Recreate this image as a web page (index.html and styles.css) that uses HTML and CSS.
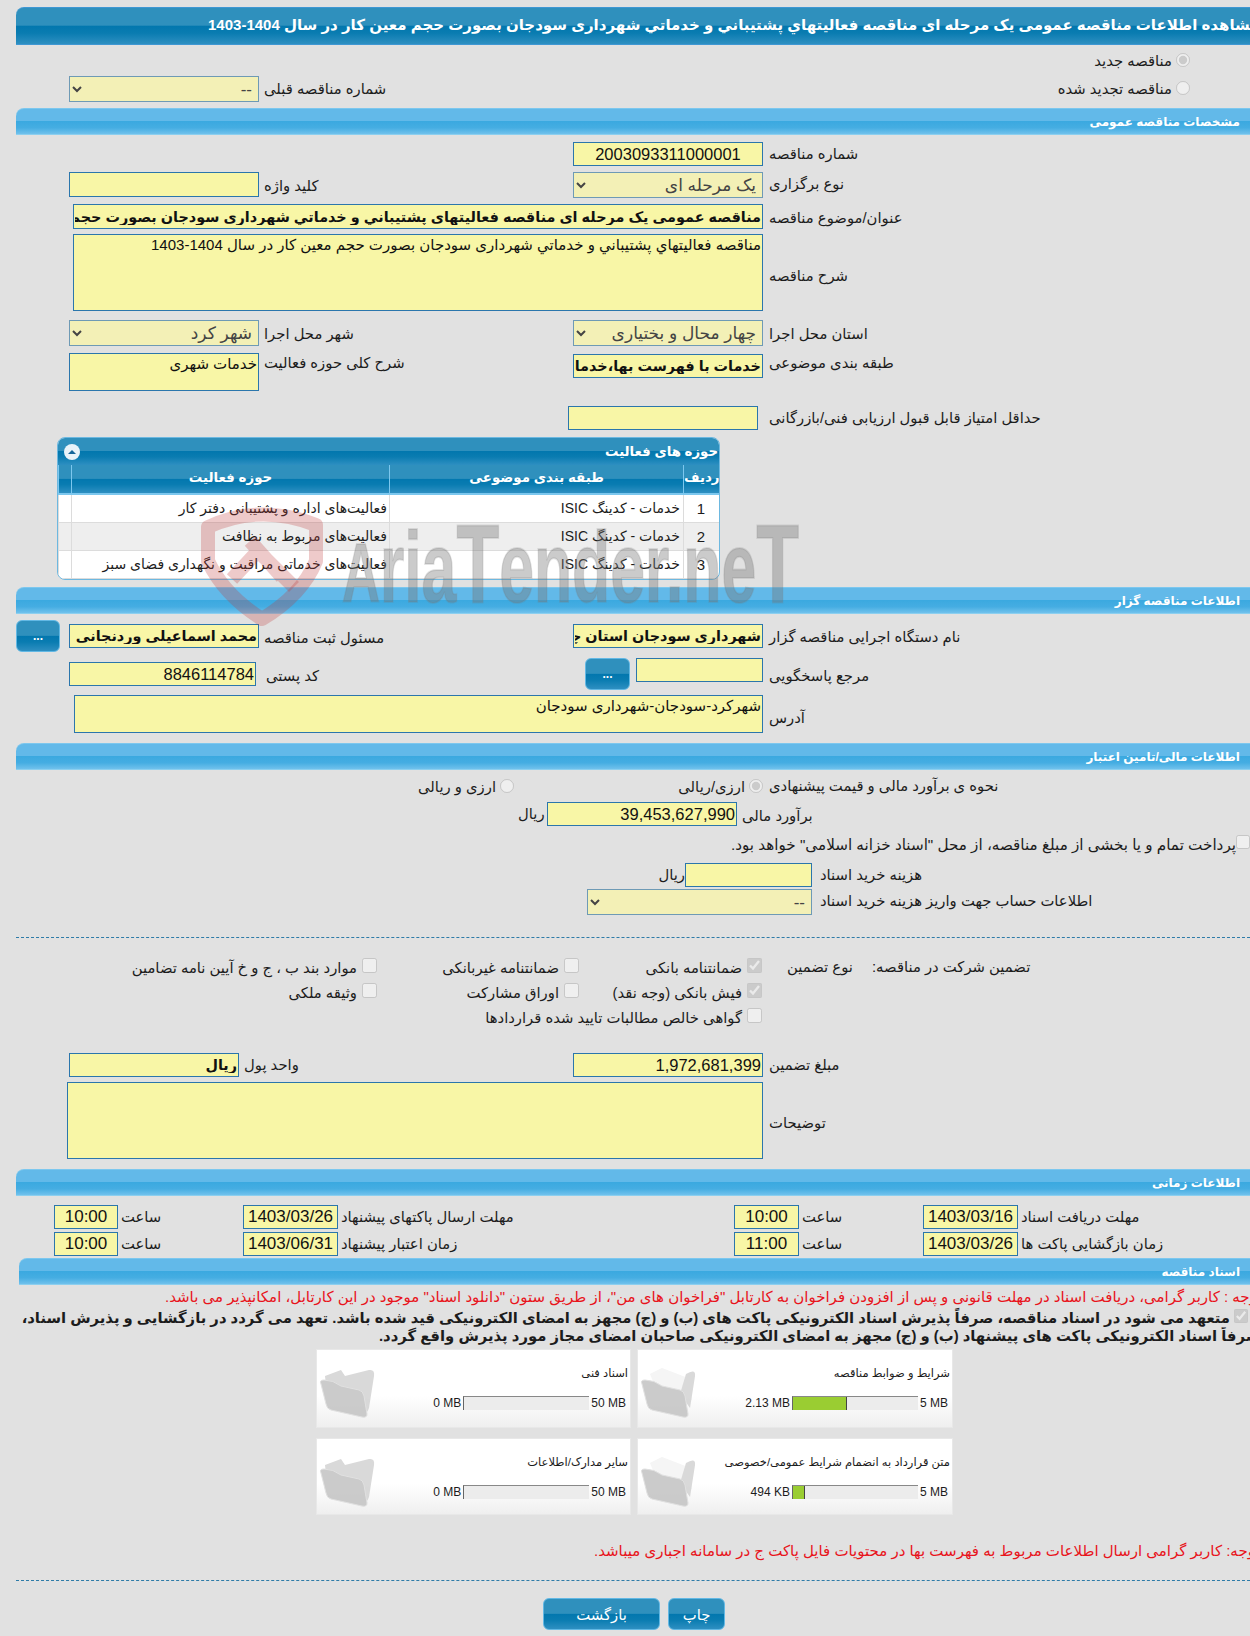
FILE: index.html
```html
<!DOCTYPE html>
<html lang="fa">
<head>
<meta charset="utf-8">
<title>مشاهده اطلاعات مناقصه</title>
<link rel="stylesheet" href="styles.css">
</head>
<body>
<div class="page">
  <h1 class="banner"><span>مشاهده اطلاعات مناقصه عمومی یک مرحله ای مناقصه فعالیتهاي پشتیباني و خدماتي شهرداری سودجان بصورت حجم معین کار در سال 1404-1403</span></h1>

  <div class="top">
    <div class="top-left">
      <select class="sel w190" disabled><option>--</option></select>
      <label class="lab lab-gap lab-t1">شماره مناقصه قبلی</label>
    </div>
    <div class="radios">
      <label class="radio-line"><input type="radio" name="kind" checked disabled><span>مناقصه جدید</span></label>
      <label class="radio-line"><input type="radio" name="kind" disabled><span>مناقصه تجدید شده</span></label>
    </div>
  </div>

  <h2 class="section"><span>مشخصات مناقصه عمومی</span></h2>
  <div class="after-section">
    <div class="row h30">
      <span></span><span></span>
      <input class="inp ctr" readonly value="2003093311000001">
      <label class="lab lab-r">شماره مناقصه</label>
    </div>
    <div class="row h32">
      <input class="inp h25" readonly>
      <label class="lab lab-l lab-s">کلید واژه</label>
      <select class="sel" disabled><option>یک مرحله ای</option></select>
      <label class="lab lab-r">نوع برگزاری</label>
    </div>
    <div class="row h30">
      <input class="inp strong wide h25" readonly value="مناقصه عمومی یک مرحله ای مناقصه فعالیتهاي پشتیباني و خدماتي شهرداری سودجان بصورت حجم معین کار در سال 1404-1403">
      <label class="lab lab-r lab-s">عنوان/موضوع مناقصه</label>
    </div>
    <div class="row h86">
      <textarea class="inp txt wide h77" readonly>مناقصه فعالیتهاي پشتیباني و خدماتي شهرداری سودجان بصورت حجم معین کار در سال 1404-1403</textarea>
      <label class="lab lab-r lab-mid">شرح مناقصه</label>
    </div>
    <div class="row h34">
      <select class="sel" disabled><option>شهر کرد</option></select>
      <label class="lab lab-l lab-s">شهر محل اجرا</label>
      <select class="sel" disabled><option>چهار محال و بختیاری</option></select>
      <label class="lab lab-r lab-s">استان محل اجرا</label>
    </div>
    <div class="row h52">
      <textarea class="inp txt h38 up" readonly>خدمات شهری</textarea>
      <label class="lab lab-l up">شرح کلی حوزه فعالیت</label>
      <input class="inp strong" readonly value="خدمات با فهرست بها،خدمات عمومی">
      <label class="lab lab-r up">طبقه بندی موضوعی</label>
    </div>
    <div class="row h31">
      <span></span><span></span>
      <input class="inp shift-l" readonly>
      <label class="lab lab-r">حداقل امتیاز قابل قبول ارزیابی فنی/بازرگانی</label>
    </div>
  </div>

  <div class="panel">
    <div class="panel-head">
      <span class="toggle"><svg viewBox="0 0 16 16" width="16" height="16"><rect width="16" height="16" rx="8" fill="#e8f3f9"/><path d="M4 10 L8 6 L12 10 Z" fill="#14669a"/></svg></span>
      <span>حوزه های فعالیت</span>
    </div>
    <table class="grid">
      <thead>
        <tr><th class="c-blank"></th><th class="c-area">حوزه فعالیت</th><th class="c-cat">طبقه بندی موضوعی</th><th class="c-no">ردیف</th></tr>
      </thead>
      <tbody>
        <tr><td></td><td>فعالیت‌های  اداره و پشتیبانی دفتر کار</td><td>خدمات - کدینگ ISIC</td><td class="num">1</td></tr>
        <tr class="alt"><td></td><td>فعالیت‌های مربوط به نظافت</td><td>خدمات - کدینگ ISIC</td><td class="num">2</td></tr>
        <tr><td></td><td>فعالیت‌های خدماتی مراقبت و نگهداری فضای سبز</td><td>خدمات - کدینگ ISIC</td><td class="num">3</td></tr>
      </tbody>
    </table>
  </div>

  <h2 class="section gap7"><span>اطلاعات مناقصه گزار</span></h2>
  <div class="after-section s10">
    <div class="row btn-row h34">
      <button class="btn small up4">...</button>
      <input class="inp strong" readonly value="محمد اسماعیلی وردنجانی">
      <label class="lab lab-l lab-s">مسئول ثبت مناقصه</label>
      <input class="inp strong" readonly value="شهرداری سودجان استان چهار محال و بختیاری">
      <label class="lab lab-r lab-t1">نام دستگاه اجرایی مناقصه گزار</label>
    </div>
    <div class="row btn-row h37">
      <span></span>
      <input class="inp post" readonly value="8846114784">
      <label class="lab lab-post">کد پستی</label>
      <div class="ref">
        <button class="btn small">...</button>
        <input class="inp" readonly>
      </div>
      <label class="lab lab-r lab-ref">مرجع پاسخگویی</label>
    </div>
    <div class="row h48">
      <textarea class="inp txt wide addr" readonly>شهرکرد-سودجان-شهرداری سودجان</textarea>
      <label class="lab lab-r lab-addr">آدرس</label>
    </div>
  </div>

  <h2 class="section"><span>اطلاعات مالی/تامین اعتبار</span></h2>
  <div class="row fin-radio">
    <label class="radio-line span2 end59"><input type="radio" name="cur" disabled><span>ارزی و ریالی</span></label>
    <label class="radio-line"><input type="radio" name="cur" checked disabled><span>ارزی/ریالی</span></label>
    <label class="lab lab-r">نحوه ی برآورد مالی و قیمت پیشنهادی</label>
  </div>
  <div class="flow budget">
    <span class="lab unit">ریال</span>
    <input class="inp w190" readonly value="39,453,627,990">
    <label class="lab lab-gap lab-s">برآورد مالی</label>
  </div>
  <label class="check-row"><input type="checkbox" disabled><span>پرداخت تمام و یا بخشی از مبلغ مناقصه، از محل "اسناد خزانه اسلامی" خواهد بود.</span></label>
  <div class="flow doc-fee">
    <span class="lab unit-tight">ریال</span>
    <input class="inp w127" readonly>
    <label class="lab lab-gap8">هزینه خرید اسناد</label>
  </div>
  <div class="flow account">
    <select class="sel w225" disabled><option>--</option></select>
    <label class="lab lab-gap8">اطلاعات حساب جهت واریز هزینه خرید اسناد</label>
  </div>
  <hr class="dash">

  <div class="guarantee">
    <label class="g-item"><input type="checkbox" disabled><span>موارد بند ب ، ج و خ آیین نامه تضامین</span></label>
    <label class="g-item"><input type="checkbox" disabled><span>ضمانتنامه غیربانکی</span></label>
    <label class="g-item"><input type="checkbox" checked disabled><span>ضمانتنامه بانکی</span></label>
    <span class="lab g-type">نوع تضمین</span>
    <span class="lab">تضمین شرکت در مناقصه:</span>

    <label class="g-item"><input type="checkbox" disabled><span>وثیقه ملکی</span></label>
    <label class="g-item"><input type="checkbox" disabled><span>اوراق مشارکت</span></label>
    <label class="g-item"><input type="checkbox" checked disabled><span>فیش بانکی (وجه نقد)</span></label>
    <span></span><span></span>

    <span></span>
    <label class="g-item g-wide"><input type="checkbox" disabled><span>گواهی خالص مطالبات تایید شده قراردادها</span></label>
    <span></span><span></span>
  </div>

  <div class="row h29">
    <input class="inp strong w170" readonly value="ریال">
    <label class="lab lab-unit">واحد پول</label>
    <input class="inp num-left" readonly value="1,972,681,399">
    <label class="lab lab-r">مبلغ تضمین</label>
  </div>
  <div class="row h87">
    <textarea class="inp txt notes" readonly></textarea>
    <label class="lab lab-r lab-notes">توضیحات</label>
  </div>

  <h2 class="section"><span>اطلاعات زمانی</span></h2>
  <div class="times">
    <input class="inp ctr" readonly value="10:00"><span class="lab">ساعت</span>
    <input class="inp ctr" readonly value="1403/03/26"><span class="lab">مهلت ارسال پاکتهای پیشنهاد</span>
    <input class="inp ctr" readonly value="10:00"><span class="lab">ساعت</span>
    <input class="inp ctr" readonly value="1403/03/16"><span class="lab">مهلت دریافت اسناد</span>

    <input class="inp ctr" readonly value="10:00"><span class="lab">ساعت</span>
    <input class="inp ctr" readonly value="1403/06/31"><span class="lab">زمان اعتبار پیشنهاد</span>
    <input class="inp ctr" readonly value="11:00"><span class="lab">ساعت</span>
    <input class="inp ctr" readonly value="1403/03/26"><span class="lab">زمان بازگشایی پاکت ها</span>
  </div>

  <h2 class="section docs-head"><span>اسناد مناقصه</span></h2>
  <p class="red-line"><span>توجه : کاربر گرامی، دریافت اسناد در مهلت قانونی و پس از افزودن فراخوان به کارتابل "فراخوان های من"، از طریق ستون "دانلود اسناد" موجود در این کارتابل، امکانپذیر می باشد.</span></p>
  <div class="pledge">
    <label class="pledge-one"><input type="checkbox" checked disabled><span>متعهد می شود در اسناد مناقصه، صرفاً پذیرش اسناد الکترونیکی پاکت های (ب) و (ج) مجهز به امضای الکترونیکی قید شده باشد. تعهد می گردد در بازگشایی و پذیرش اسناد،</span></label>
    <p class="pledge-two"><span>صرفاً اسناد الکترونیکی پاکت های پیشنهاد (ب) و (ج) مجهز به امضای الکترونیکی صاحبان امضای مجاز مورد پذیرش واقع گردد.</span></p>
  </div>

  <div class="cards">
    <div class="card">
      <svg class="folder" viewBox="0 0 60 56"><path d="M6 12 L22 6 L26 12 L50 6 Q56 5 55 12 L50 44 Q48 50 44 50 L14 46 Q10 45 9 40 Z" fill="#d5d5d5"/><path d="M2 20 Q0 16 5 16 Q14 16 22 22 L40 26 Q44 27 45 32 L48 50 Q48 54 43 53 L12 46 Q8 45 7 40 Z" fill="#c6c6c6" stroke="#dedede"/></svg>
      <div class="card-body">
        <div class="card-title">اسناد فنی</div>
        <div class="meter"><span>0 MB</span><span class="bar"><i class="fill none"></i></span><span>50 MB</span></div>
      </div>
    </div>
    <div class="card">
      <svg class="folder" viewBox="0 0 60 56"><path d="M10 10 L22 4 L48 14 L52 36 L20 34 Z" fill="#f4f4f4"/><path d="M46 10 Q56 4 55 12 L50 44 L40 30 Z" fill="#d5d5d5"/><path d="M2 20 Q0 16 5 16 Q14 16 22 22 L40 26 Q44 27 45 32 L48 50 Q48 54 43 53 L12 46 Q8 45 7 40 Z" fill="#c6c6c6" stroke="#dedede"/></svg>
      <div class="card-body">
        <div class="card-title">شرایط و ضوابط مناقصه</div>
        <div class="meter"><span>2.13 MB</span><span class="bar"><i class="fill" style="width:54px"></i></span><span>5 MB</span></div>
      </div>
    </div>
    <div class="card">
      <svg class="folder" viewBox="0 0 60 56"><path d="M6 12 L22 6 L26 12 L50 6 Q56 5 55 12 L50 44 Q48 50 44 50 L14 46 Q10 45 9 40 Z" fill="#d5d5d5"/><path d="M2 20 Q0 16 5 16 Q14 16 22 22 L40 26 Q44 27 45 32 L48 50 Q48 54 43 53 L12 46 Q8 45 7 40 Z" fill="#c6c6c6" stroke="#dedede"/></svg>
      <div class="card-body">
        <div class="card-title">سایر مدارک/اطلاعات</div>
        <div class="meter"><span>0 MB</span><span class="bar"><i class="fill none"></i></span><span>50 MB</span></div>
      </div>
    </div>
    <div class="card">
      <svg class="folder" viewBox="0 0 60 56"><path d="M10 10 L22 4 L48 14 L52 36 L20 34 Z" fill="#f4f4f4"/><path d="M46 10 Q56 4 55 12 L50 44 L40 30 Z" fill="#d5d5d5"/><path d="M2 20 Q0 16 5 16 Q14 16 22 22 L40 26 Q44 27 45 32 L48 50 Q48 54 43 53 L12 46 Q8 45 7 40 Z" fill="#c6c6c6" stroke="#dedede"/></svg>
      <div class="card-body">
        <div class="card-title">متن قرارداد به انضمام شرایط عمومی/خصوصی</div>
        <div class="meter"><span>494 KB</span><span class="bar"><i class="fill" style="width:12px"></i></span><span>5 MB</span></div>
      </div>
    </div>
  </div>

  <p class="red-line note2"><span>توجه: کاربر گرامی ارسال اطلاعات مربوط به فهرست بها در محتویات فایل پاکت ج در سامانه اجباری میباشد.</span></p>
  <hr class="dash d2">
  <div class="actions">
    <button class="btn back">بازگشت</button>
    <button class="btn print">چاپ</button>
  </div>

  <svg class="watermark" viewBox="0 0 620 135" width="620" height="135">
    <g fill="none" stroke="#c23b3b" stroke-opacity=".27" stroke-width="14" stroke-linejoin="round">
      <path d="M18 32 Q70 8 126 30 L126 66 Q112 100 72 124 Q34 100 18 66 Z"/>
      <path d="M42 84 L68 56 L104 92 M60 46 L92 82"/>
    </g>
    <text x="152" y="107" textLength="457" lengthAdjust="spacingAndGlyphs" class="wm-text"><tspan class="wm-cap">A</tspan><tspan class="wm-low">ria</tspan><tspan class="wm-big">T</tspan><tspan class="wm-low">ender.ne</tspan><tspan class="wm-big">T</tspan></text>
  </svg>
</div>
</body>
</html>
```
FILE: styles.css
```css
* { box-sizing: border-box; }
html, body { margin: 0; padding: 0; background: #e1e1e1; overflow-x: hidden; }
body {
  font-family: "Liberation Sans", "DejaVu Sans", sans-serif;
  font-size: 14.8px;
  color: #1c1c1c;
}
.page { position: relative; width: 1234px; margin: 7px 0 0 16px; height: 1629px; }

.banner {
  margin: 0; height: 38px; overflow: hidden;
  border: 1px solid #3f97d3; border-width: 1px 0;
  border-radius: 8px 0 0 0;
  background: linear-gradient(#2f90bd 0, #2f90bd 48%, #0277ae 50%, #0a7cb1 70%, #2e8fc1 100%);
  color: #fff; font-size: 15px; font-weight: bold; line-height: 34px;
}
.banner span { display: block; width: 1500px; padding-left: 192px; direction: rtl; text-align: left; white-space: nowrap; }

.top { display: flex; justify-content: space-between; height: 63px; }
.top-left { display: flex; padding: 31px 0 0 53px; }
.radios { width: 190px; margin-right: 60px; padding-top: 1px; }
.radio-line { display: flex; direction: rtl; align-items: center; height: 28px; gap: 4px; white-space: nowrap; }
.radio-line input { margin: 0; width: 14px; height: 14px; flex: none; }

.section {
  margin: 0; height: 27px; overflow: hidden;
  border-radius: 8px 0 0 0;
  background: linear-gradient(#62b9e9 0, #62b9e9 48%, #3ba9e0 50%, #45ade2 75%, #70c1ec 100%);
  border-top: 1px solid #7cc7ee; border-bottom: 1px solid #8ccfef;
  color: #fff; font-size: 12px; font-weight: bold; line-height: 26px;
  direction: rtl; padding-right: 10px;
}
.gap7 { margin-top: 7px; }
.after-section { padding-top: 7px; }
.s10 { padding-top: 10px; }

.row { display: grid; grid-template-columns: 190px 314px 190px 1fr; padding-left: 53px; align-items: start; }
.btn-row { grid-template-columns: 53px 190px 314px 190px 1fr; padding-left: 0; }
.h29 { height: 29px; } .h30 { height: 30px; } .h31 { height: 31px; } .h32 { height: 32px; }
.h34 { height: 34px; } .h37 { height: 37px; } .h48 { height: 48px; } .h52 { height: 52px; }
.h86 { height: 86px; } .h87 { height: 87px; }

.lab { direction: rtl; text-align: left; line-height: 24px; white-space: nowrap; }
.lab-l { padding-left: 5px; }
.lab-r { padding-left: 6px; }
.lab-gap { margin-left: 5px; }
.lab-gap8 { margin-left: 8px; }
.lab-s { padding-top: 2px; }
.lab-t1 { padding-top: 1px; }
.lab-mid { padding-top: 30px; }
.lab-post { padding-left: 10px; margin-left: -3px; margin-top: 6px; }
.lab-ref { padding-top: 6px; }
.lab-addr { padding-top: 11px; }
.lab-unit { margin-left: -15px; }
.lab-notes { padding-top: 29px; }
.lab.up { margin-top: -3px; }

.inp {
  display: block; width: 100%; height: 24px; margin: 0; padding: 0 1px;
  border: 1px solid #2b76ac; border-radius: 0; outline: 0;
  background: #f8f6a6; color: #111;
  font-family: "Liberation Sans", "DejaVu Sans", sans-serif; font-size: 16.5px;
  direction: rtl; text-align: right;
}
.ctr { text-align: center; }
.h25 { height: 25px; }
.strong { font-weight: bold; font-size: 14.4px; }
.txt { font-size: 15px; resize: none; overflow: hidden; line-height: 18px; padding-top: 1px; }
.wide { grid-column: 1 / 4; width: calc(100% - 4px); margin-left: 4px; }
.h77 { height: 77px; }
.h38 { height: 38px; }
.up { margin-top: -1px; }
.up4 { margin-top: -4px; }
.shift-l { margin-left: -5px; }
.post { width: 187px; margin-top: 4px; }
.addr { height: 38px; width: calc(100% - 5px); margin-left: 5px; }
.notes { grid-column: 1 / 4; width: 696px; height: 77px; margin-left: -2px; }
.num-left { direction: ltr; }

.sel {
  display: block; width: 100%; height: 26px; margin: 0; padding: 0 2px;
  border: 1px solid #6e9ab5; border-radius: 0;
  background-color: #f3f0b6; color: #444; opacity: 1;
  font-family: "Liberation Sans", "DejaVu Sans", sans-serif; font-size: 17px;
  direction: rtl;
}
.w190 { width: 190px; }
.w127 { width: 127px; }
.w225 { width: 225px; }
.w170 { width: 170px; }

.ref { display: flex; margin-top: 0; }
.ref .btn { margin: 0 6px 0 12px; flex: none; width: 45px; }
.ref .inp { width: 127px; }

.btn {
  border: 1px solid #62b8e4; border-radius: 6px; padding: 0;
  background: linear-gradient(#2f90bd 0, #2f90bd 48%, #0277ae 50%, #0a7cb1 70%, #2e8fc1 100%);
  color: #fff; font-family: "Liberation Sans", "DejaVu Sans", sans-serif; font-size: 14.8px;
}
.small { width: 44px; height: 32px; font-weight: bold; font-size: 12px; }

.panel {
  width: 663px; height: 143px; margin-left: 41px; overflow: hidden;
  background: #fff; border: 1px solid #6db8e0; border-radius: 8px;
}
.panel-head {
  display: flex; justify-content: space-between; align-items: center;
  height: 27px; padding: 0 1px 0 6px; direction: ltr;
  background: linear-gradient(#2f90bd 0, #2f90bd 48%, #0277ae 50%, #0a7cb1 70%, #2e8fc1 100%);
  color: #fff; font-weight: bold; font-size: 13.3px;
}
.toggle { display: flex; }
.grid { width: 100%; border-collapse: collapse; table-layout: fixed; }
.grid th {
  height: 29px; padding: 0 0 4px; color: #fff; font-size: 13.4px; font-weight: bold;
  background: linear-gradient(#2f90bd 0, #2f90bd 48%, #0277ae 50%, #0a7cb1 70%, #2e8fc1 100%);
  border-left: 1px solid #7cc7ee; border-bottom: 2px solid #7cc7ee;
}
.c-blank { width: 13px; }
.c-area { width: 318px; }
.c-cat { width: 294px; }
.grid td {
  height: 28px; padding: 0 2px; direction: rtl; text-align: right; white-space: nowrap;
  border-left: 1px solid #dcdcdc; border-bottom: 1px solid #dcdcdc; font-size: 14px; overflow: hidden;
}
.grid td + td + td { padding-right: 3px; }
.grid td.num { text-align: center; font-size: 15px; }
.grid .alt td { background: #eeeeee; }

.fin-radio { height: 32px; padding-top: 4px; }
.fin-radio .radio-line { height: 24px; }
.span2 { grid-column: 1 / 3; }
.end59 { padding-right: 59px; }
.flow { display: flex; align-items: flex-start; }
.budget { height: 32px; padding-left: 502px; }
.unit { width: 29px; }
.unit-tight { width: 24px; }
.doc-fee { height: 26px; padding-left: 645px; margin-top: 5px; }
.account { height: 41px; padding-left: 571px; }
.check-row { display: flex; direction: rtl; align-items: center; height: 26px; gap: 0; font-size: 15.2px; margin-top: -2px; margin-bottom: 2px; }
.check-row input { margin: 0 0 6px 0; width: 14px; height: 14px; flex: none; }

.dash { margin: 7px 0 0; height: 0; border: 0; border-top: 1px dashed #2e7ba8; }

.guarantee {
  display: grid; grid-template-columns: 361px 202px 183px 110px 1fr;
  grid-template-rows: 25px 25px 25px; height: 115px; padding-top: 17px;
}
.guarantee .lab { line-height: 25px; }
.g-type { margin-left: 25px; }
.g-item { display: flex; direction: rtl; align-items: center; gap: 5px; white-space: nowrap; }
.g-item input { margin: 0 0 4px 0; width: 15px; height: 15px; flex: none; }
.g-wide { grid-column: 2 / 4; }

.times {
  display: grid; grid-template-columns: 64px 125px 95px 396px 65px 124px 95px 1fr;
  grid-template-rows: 27px 28px; height: 62px; padding: 9px 0 0 38px;
}
.times .inp { height: 24px; font-size: 17px; }
.times .lab { padding-left: 3px; }

.docs-head { margin-left: 3px; }

.red-line { margin: 0; height: 24px; overflow: hidden; line-height: 24px; color: #e8141c; }
.red-line span { display: block; width: 1500px; direction: rtl; text-align: left; white-space: nowrap; padding-left: 149px; font-size: 15px; }
.pledge { height: 40px; font-weight: bold; font-size: 14.8px; line-height: 18px; }
.pledge-one { display: flex; direction: rtl; height: 18px; white-space: nowrap; }
.pledge-one input { margin: 0 2px 0 4px; width: 14px; height: 14px; flex: none; }
.pledge-two { margin: 0; overflow: hidden; height: 18px; }
.pledge-two span { display: block; width: 1500px; direction: rtl; text-align: left; white-space: nowrap; padding-left: 363px; }

.cards { display: grid; grid-template-columns: 315px 316px; grid-template-rows: 79px 77px; gap: 10px 6px; margin-left: 300px; }
.card {
  display: flex; align-items: flex-start; height: 100%;
  background: linear-gradient(#fff 0, #fff 60%, #efefef 100%);
  border: 1px solid #e8e8e8; padding: 12px 2px 0 2px;
}
.folder { width: 60px; height: 56px; flex: none; margin-top: 2px; opacity: .9; }
.card-body { flex: 1; min-width: 0; }
.card-title { direction: rtl; text-align: right; font-size: 11.5px; line-height: 22px; white-space: nowrap; }
.meter { display: flex; justify-content: flex-end; align-items: center; gap: 2px; margin-top: 11px; padding-right: 2px; font-size: 12px; line-height: 16px; }
.bar { display: block; width: 126px; height: 14px; background: #ececec; border-left: 1px solid #666; border-top: 1px solid #888; }
.fill { display: block; height: 13px; background: #9acd32; border-right: 1px solid #444; }
.fill.none { width: 1px; background: transparent; border: 0; }

.note2 { margin-top: 24px; }
.note2 span { padding-left: 578px; }
.d2 { margin-top: 17px; }
.actions { display: flex; gap: 8px; margin: 17px 0 0 527px; }
.back { width: 117px; height: 32px; }
.print { width: 57px; height: 32px; }

.watermark { position: absolute; left: 174px; top: 488px; pointer-events: none; }
.wm-text { fill: #777; fill-opacity: .38; stroke: #777; stroke-opacity: .2; stroke-width: 2px; font-family: "Liberation Sans", sans-serif; font-weight: bold; }
.wm-cap { font-size: 84px; }
.wm-low { font-size: 100px; }
.wm-big { font-size: 112px; }
```
